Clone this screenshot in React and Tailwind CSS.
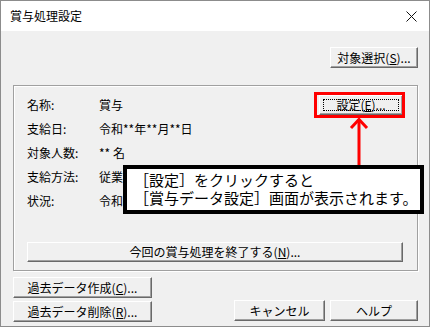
import React from "react";

const font = { fontFamily: '"Noto Sans CJK JP", "Noto Sans", sans-serif' };

// classic Windows push button
const WinButton = ({ children, className = "", focused = false }) => (
  <div
    className={`flex items-center justify-center bg-[#f0f0f0] border border-t-white border-l-white border-r-[#696969] border-b-[#696969] shadow-[inset_-1px_-1px_0_#a0a0a0] text-[12px] leading-none text-black ${className}`}
  >
    {focused ? (
      <div className="flex items-center justify-center w-[calc(100%-6px)] h-[calc(100%-6px)] border border-dotted border-black">
        {children}
      </div>
    ) : (
      children
    )}
  </div>
);

// values of rows 4 and 5 are mostly hidden under the callout
const rows = [
  ["名称:", "賞与"],
  ["支給日:", "令和**年**月**日"],
  ["対象人数:", "** 名"],
  ["支給方法:", "従業"],
  ["状況:", "令和"],
];

export default function App() {
  return (
    <div className="relative w-[430px] h-[327px] border border-[#8c8c8c] flex flex-col bg-white" style={font}>
      {/* Title bar */}
      <div className="h-[30px] flex items-center justify-between pl-[9px] pr-[11px] bg-white">
        <span className="text-[12px] text-black">賞与処理設定</span>
        <svg width="11" height="11" viewBox="0 0 11 11" className="mr-[1px]">
          <path d="M0.5 0.5 L10.5 10.5 M10.5 0.5 L0.5 10.5" stroke="#111" strokeWidth="1" />
        </svg>
      </div>

      {/* Body */}
      <div className="flex-1 bg-[#f0f0f0] pl-[12px] pr-[11px] pt-[16px]">
        <div className="flex justify-end">
          <WinButton className="w-[88px] h-[21px]">
            対象選択(<u>S</u>)...
          </WinButton>
        </div>

        {/* Group box */}
        <div className="mt-[17px] h-[186px] border border-[#a0a0a0] shadow-[1px_1px_0_#fff,inset_1px_1px_0_#fff] pl-[13px] pr-[14px] pt-[7px]">
          {rows.map(([label, value], i) => (
            <div key={i} className="h-[24px] flex items-center text-[12px] text-black">
              <span className="w-[72px]">{label}</span>
              <span className="flex-1">{value}</span>
              {i === 0 && (
                <WinButton className="w-[84px] h-[20px]" focused>
                  設定(<u>E</u>)...
                </WinButton>
              )}
            </div>
          ))}
          <WinButton className="mt-[29px] w-full h-[20px]">
            今回の賞与処理を終了する(<u>N</u>)...
          </WinButton>
        </div>

        {/* Bottom buttons */}
        <div className="mt-[6px] flex justify-between">
          <div className="flex flex-col gap-[3px]">
            <WinButton className="w-[139px] h-[21px]">
              過去データ作成(<u>C</u>)...
            </WinButton>
            <WinButton className="w-[139px] h-[21px]">
              過去データ削除(<u>R</u>)...
            </WinButton>
          </div>
          <div className="flex items-end gap-[5px] pb-[1px]">
            <WinButton className="w-[91px] h-[21px]">キャンセル</WinButton>
            <WinButton className="w-[88px] h-[21px]">ヘルプ</WinButton>
          </div>
        </div>
      </div>

      {/* Annotation: red highlight box */}
      <div className="absolute left-[313px] top-[91px] w-[91px] h-[26px] border-[3px] border-[#ff0000]" />

      {/* Annotation: arrow */}
      <svg className="absolute left-[348px] top-[116px]" width="20" height="52" viewBox="0 0 20 52">
        <path d="M10 2 L10 52" stroke="#ff0000" strokeWidth="3" />
        <path d="M2 11 L10 2.5 L18 11" stroke="#ff0000" strokeWidth="3" fill="none" />
      </svg>

      {/* Annotation: callout */}
      <div className="absolute left-[122px] top-[164px] w-[301px] h-[49px] border-4 border-black bg-white pl-[7px] pt-[2px] text-[15px] leading-[18px] text-black">
        <div>［設定］をクリックすると</div>
        <div>［賞与データ設定］画面が表示されます。</div>
      </div>
    </div>
  );
}
